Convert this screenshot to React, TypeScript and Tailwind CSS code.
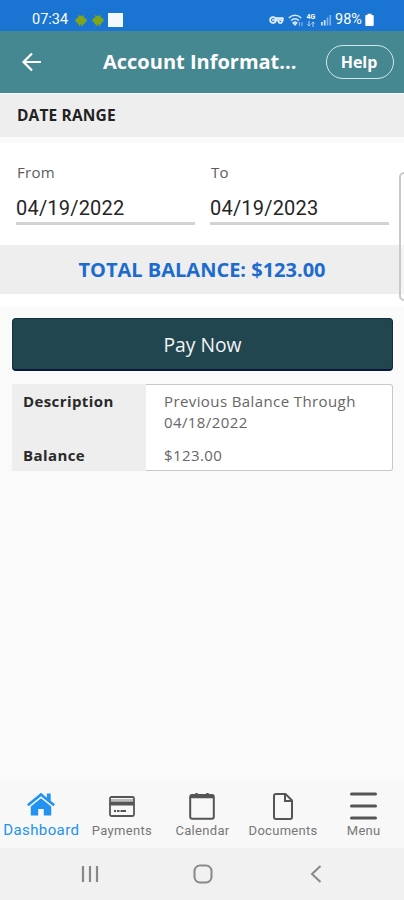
import type { ReactNode } from "react"

function AndroidIcon() {
  return (
    <svg width="12" height="13" viewBox="0 0 12 13" fill="#7fa51c">
      <path d="M3.500 2.400 2.800.6l1.500 1.200h3.400L9.200.6l-.7 1.800c.7.5 1.100 1.200 1.200 2.100h1.800v3.500H9.700v2H8.300V12H6.700v-1.600H5.300V12H3.700v-2H2.300V8H.5V4.500h1.800c.1-.9.5-1.600 1.200-2.100z" />
    </svg>
  )
}

function StatusBar() {
  return (
    <div className="flex h-[31px] items-start bg-[#1974d2] pl-8 pr-[30px] pt-[11px] text-white">
      <span className="w-[38px] whitespace-nowrap font-['Roboto',sans-serif] text-[14.500px] leading-[18px]">07:34</span>
      <div className="ml-[5px] mt-[3px] flex gap-[5px]">
        <AndroidIcon />
        <AndroidIcon />
      </div>
      <div className="ml-[4px] mt-[2px] h-[14px] w-[15px] bg-[#f3f8ff]" />
      <div className="ml-auto flex h-[18px] items-center">
        <svg width="15" height="10" viewBox="0 0 15 10" fill="none" stroke="#e6f1ff" strokeWidth="1.700">
          <circle cx="4" cy="5" r="2.900" />
          <path d="M3 5h11M7 3.200h6.800v2l-1.500 2.600h-2L9 5.500" />
        </svg>
        <svg className="ml-1" width="16" height="13" viewBox="0 0 16 13" fill="none" stroke="#d8e9ff" strokeWidth="1.500">
          <path d="M.8 4C4.500.4 9.500.4 13.200 4M3 6.500c2.500-2.200 5.500-2.200 8 0M5.200 8.800c1.200-1 2.400-1 3.600 0L7 10.800z" />
          <path d="M11.500 8v4M14 8v4" strokeWidth="1" opacity=".6" />
        </svg>
        <div className="ml-[2px] flex w-[10px] flex-col items-center">
          <span className="font-['Roboto',sans-serif] text-[7px] font-bold leading-[7px]">4G</span>
          <svg width="8" height="6" viewBox="0 0 8 6" fill="none" stroke="#fff" opacity=".7">
            <path d="M2 0v5M.5 3.500 2 5l1.500-1.500M6 6V1M4.500 2.500 6 1l1.500 1.500" />
          </svg>
        </div>
        <svg className="ml-[4px]" width="12" height="12" viewBox="0 0 12 12" fill="#fff">
          <path d="M1 8h1.700v3.500H1zM3.800 6h1.700v5.500H3.800z" opacity=".8" />
          <path d="M6.600 3.500h1.700v8H6.600zM9.400 1h1.700v10.500H9.400z" opacity=".45" />
        </svg>
        <span className="ml-[3px] w-[30px] whitespace-nowrap font-['Roboto',sans-serif] text-[14.500px] leading-[18px]">98%</span>
        <svg width="9" height="14" viewBox="0 0 9 14" fill="#fff">
          <path d="M2.500.8h4V2H8a.7.7 0 0 1 .7.7v9.600a.7.7 0 0 1-.7.700H1a.7.7 0 0 1-.7-.7V2.700A.7.7 0 0 1 1 2h1.500z" />
        </svg>
      </div>
    </div>
  )
}

function Header() {
  return (
    <header className="flex h-[62px] items-center bg-[#468891] pl-[21px] pr-[10px] text-white">
      <svg width="21" height="20" viewBox="0 0 21 20" fill="none" stroke="currentColor" strokeWidth="2.200">
        <path d="M20 10H2.500M11 1.500 2.500 10l8.500 8.500" />
      </svg>
      <h1 className="ml-[61px] w-[200px] whitespace-nowrap text-[20px] font-bold leading-7">Account Informat...</h1>
      <button className="ml-auto h-[34px] w-[68px] rounded-full border-[1.500px] border-[#d5e6e9] pr-[2px] text-[16px] font-bold">
        Help
      </button>
    </header>
  )
}

function DateField({ label, value }: { label: string; value: string }) {
  return (
    <div className="w-[179px] border-b-[3px] border-[#d2d2d2]">
      <div className="pl-px text-[15px] leading-5 tracking-[0.300px] text-[#5c5c5c]">{label}</div>
      <div className="mt-[14px] h-[26px] whitespace-nowrap font-['Roboto',sans-serif] text-[20px] leading-[25px] tracking-[0.200px] text-[#252525]">{value}</div>
    </div>
  )
}

function Tab({ label, active, children }: { label: string; active?: boolean; children: ReactNode }) {
  return (
    <div className={active ? "flex flex-1 flex-col items-center text-[#2293f0]" : "flex flex-1 flex-col items-center text-[#555]"}>
      <div className="flex h-[30px] items-center">{children}</div>
      <span
        className={
          active
            ? "whitespace-nowrap font-['Roboto',sans-serif] text-[15px] leading-[21px] tracking-[0.400px]"
            : "whitespace-nowrap font-['Roboto',sans-serif] text-[13px] leading-[22px] tracking-[0.300px] text-[#777]"
        }
      >
        {label}
      </span>
    </div>
  )
}

function TabBar() {
  return (
    <nav className="flex h-[69px] bg-[#f8f8f8] pl-px pt-[11px]">
      <Tab label="Dashboard" active>
        <svg className="-mt-[3px]" width="28" height="24" viewBox="0 0 28 24" fill="currentColor">
          <path d="M14 .8 0 12.300l1.700 2L14 4.300l12.300 10 1.700-2-4.300-3.500V1.500h-3.800v4.200z" />
          <path d="M14 6.300 3.800 14.600V23.500h7.400v-6.500h5.600v6.500h7.400v-8.900z" />
        </svg>
      </Tab>
      <Tab label="Payments">
        <svg className="mt-[3px]" width="26" height="21" viewBox="0 0 26 21" fill="none" stroke="currentColor">
          <rect x="1" y="1" width="24" height="19" rx="1.500" strokeWidth="1.800" />
          <path d="M1 4h24" strokeWidth="1.500" opacity=".5" />
          <path d="M1 7.500h24" strokeWidth="4" />
          <path d="M5 15h2M8 15h2.500M11.500 15h5.500" strokeWidth="2" />
        </svg>
      </Tab>
      <Tab label="Calendar">
        <svg className="mt-[2px]" width="26" height="28" viewBox="0 0 26 28" fill="none" stroke="currentColor">
          <rect x="1.200" y="3" width="23.600" height="23.800" rx="2" strokeWidth="2" />
          <path d="M1.500 4.500h23" strokeWidth="3.500" />
          <path d="M7.500 1v3M18.500 1v3" strokeWidth="2.500" />
        </svg>
      </Tab>
      <Tab label="Documents">
        <svg className="mt-[2px]" width="20" height="27" viewBox="0 0 20 27" fill="none" stroke="currentColor" strokeWidth="2">
          <path d="M3 1h9.500L19 7.500V24a2 2 0 0 1-2 2H3a2 2 0 0 1-2-2V3a2 2 0 0 1 2-2z" />
          <path d="M12 1v7h7" />
        </svg>
      </Tab>
      <Tab label="Menu">
        <svg className="mt-[2px]" width="27" height="28" viewBox="0 0 27 28" stroke="currentColor" strokeWidth="3" strokeLinecap="round">
          <path d="M1.500 2h24M1.500 14h24M1.500 26h24" />
        </svg>
      </Tab>
    </nav>
  )
}

function SystemNav() {
  return (
    <div className="flex h-[52px] items-center bg-[#f1f1f1] pl-[81px] pr-[82px] text-[#888]">
      <svg width="18" height="18" viewBox="0 0 18 18" stroke="currentColor" strokeWidth="2.200">
        <path d="M2 1v16M9 1v16M16 1v16" />
      </svg>
      <svg className="ml-[94px]" width="20" height="20" viewBox="0 0 20 20" fill="none" stroke="currentColor" strokeWidth="2">
        <rect x="1.500" y="1.500" width="17" height="17" rx="5.500" />
      </svg>
      <svg className="ml-auto" width="12" height="18" viewBox="0 0 12 18" fill="none" stroke="currentColor" strokeWidth="2">
        <path d="M10.500 1 2 9l8.500 8" />
      </svg>
    </div>
  )
}

export default function App() {
  return (
    <div className="relative flex h-[900px] w-[404px] flex-col overflow-hidden bg-[#fafafa] font-['Open_Sans',sans-serif]">
      <StatusBar />
      <Header />
      <div className="mt-px flex h-[43px] items-center bg-[#eee] pl-[17px] pt-px text-[15.500px] font-bold tracking-[0.150px] text-[#222]">
        DATE RANGE
      </div>
      <section className="mt-[6px] flex h-[102px] gap-[15px] bg-white pl-4 pt-[19px]">
        <div><DateField label="From" value="04/19/2022" /></div>
        <div><DateField label="To" value="04/19/2023" /></div>
      </section>
      <div className="flex h-[49px] items-center justify-center bg-[#eee] text-[20px] font-bold text-[#1c6bcf]">
        <span className="whitespace-nowrap">TOTAL BALANCE: $123.00</span>
      </div>
      <div className="h-[13px] bg-white" />
      <main className="flex-1 px-3 pt-[11px] pr-[11px]">
        <button className="h-[53px] w-full rounded-[4px] border border-b-2 border-[#10303f] border-b-[#07183c] bg-[#224650] pt-[3px] text-[19.300px] text-[#f3f5f6]">
          Pay Now
        </button>
        <div className="mt-[13px] flex h-[87px] text-[15px] leading-[21px] tracking-[0.400px]">
          <div className="flex w-[134px] flex-col bg-[#eee] pl-[11px] pt-[7px] font-bold text-[#292929]">
            <span>Description</span>
            <span className="mt-[33px]">Balance</span>
          </div>
          <div className="flex flex-1 flex-col rounded-r-[3px] border border-l-0 border-[#c8c8c8] bg-white pl-[18px] pt-[6px] text-[#666]">
            <span>
              Previous Balance Through
              <br />
              04/18/2022
            </span>
            <span className="mt-[12px]">$123.00</span>
          </div>
        </div>
      </main>
      <TabBar />
      <SystemNav />
      {/* edge panel handle, runs past the right side of the screen */}
      <div className="absolute left-[399px] top-[172px] h-[129px] w-[12px] rounded-[5px] border-2 border-[#c9c9c9] bg-white/40" />
    </div>
  )
}
